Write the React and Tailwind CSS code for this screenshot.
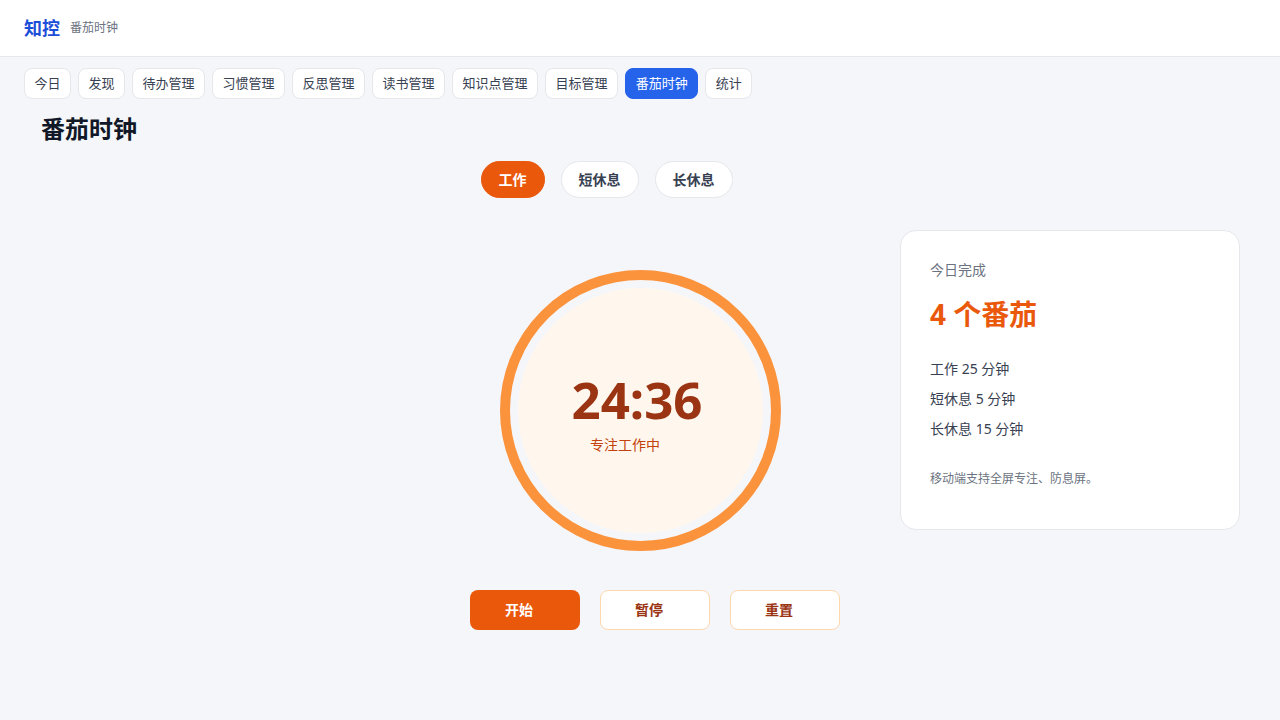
import { useState } from "react";

const navItems = [
  "今日",
  "发现",
  "待办管理",
  "习惯管理",
  "反思管理",
  "读书管理",
  "知识点管理",
  "目标管理",
  "番茄时钟",
  "统计",
];

const modes = ["工作", "短休息", "长休息"];

export default function App() {
  const [active] = useState("番茄时钟");
  const [mode, setMode] = useState("工作");

  return (
    <div className="min-h-screen bg-[#f5f6fa] font-['Noto_Sans','Noto_Sans_CJK_SC',sans-serif]">
      {/* 顶栏 */}
      <header className="h-[57px] bg-white border-b border-[#e5e7eb] flex items-center px-6 gap-[10px]">
        <span className="text-lg font-bold text-[#1d4ed8]">知控</span>
        <span className="text-xs text-[#6b7280]">番茄时钟</span>
      </header>

      <main className="px-6 pt-[11px]">
        {/* 导航 */}
        <nav className="flex gap-[7px]">
          {navItems.map((item) => (
            <button
              key={item}
              className={`h-[31px] px-[9.5px] text-[13px] rounded-lg border ${
                item === active
                  ? "bg-[#2563eb] border-[#2563eb] text-white"
                  : "bg-white border-[#e5e7eb] text-[#374151]"
              }`}
            >
              {item}
            </button>
          ))}
        </nav>

        <section className="px-4">
          <h1 className="mt-[14px] text-2xl leading-8 font-bold text-[#111827] ml-[1px]">
            番茄时钟
          </h1>

          {/* 模式切换 */}
          <div className="mt-4 flex justify-center gap-4 pr-[67px]">
            {modes.map((m) => (
              <button
                key={m}
                onClick={() => setMode(m)}
                className={`h-[37px] px-[17px] rounded-full border text-sm font-bold ${
                  m === mode
                    ? "bg-[#ea580c] border-[#ea580c] text-white"
                    : "bg-white border-[#e5e7eb] text-[#374151]"
                }`}
              >
                {m}
              </button>
            ))}
          </div>

          <div className="mt-8 grid grid-cols-[1fr_281px_1fr]">
            <div />
            {/* 计时圆环 */}
            <div className="pt-10">
              <div className="w-[281px] h-[281px] rounded-full border-[10px] border-[#fb923c] bg-[#f5f6fa] p-2">
                <div className="w-full h-full rounded-full bg-[#fff7ed] flex flex-col items-center justify-center pt-[8px]">
                  <div className="text-[51px] leading-none font-bold text-[#9a3412] mr-[6px]">
                    24:36
                  </div>
                  <div className="mt-[10px] text-sm leading-5 text-[#c2410c] mr-[30px]">
                    专注工作中
                  </div>
                </div>
              </div>
            </div>

            {/* 今日统计 */}
            <div className="justify-self-end w-[340px] h-[300px] bg-white border border-[#e5e7eb] rounded-2xl pt-[29px] px-7 pb-7">
              <p className="text-sm text-[#6b7280] ml-[1px]">今日完成</p>
              <p className="mt-4 text-[28px] leading-9 font-bold text-[#ea580c] ml-[1px]">
                4 个番茄
              </p>
              <div className="mt-[22px] text-sm leading-[30px] text-[#374151] ml-[1px]">
                <p>工作 25 分钟</p>
                <p>短休息 5 分钟</p>
                <p>长休息 15 分钟</p>
              </div>
              <p className="mt-[27px] text-xs text-[#6b7280] ml-[1px]">
                移动端支持全屏专注、防息屏。
              </p>
            </div>
          </div>

          {/* 控制按钮 */}
          <div className="mt-[39px] flex justify-center gap-5 pl-[30px]">
            <button className="w-[110px] h-10 rounded-lg bg-[#ea580c] text-white text-sm font-bold pr-3">
              开始
            </button>
            <button className="w-[110px] h-10 rounded-lg bg-white border border-[#fed7aa] text-[#9a3412] text-sm font-bold pr-3">
              暂停
            </button>
            <button className="w-[110px] h-10 rounded-lg bg-white border border-[#fed7aa] text-[#9a3412] text-sm font-bold pr-3">
              重置
            </button>
          </div>
        </section>
      </main>
    </div>
  );
}
